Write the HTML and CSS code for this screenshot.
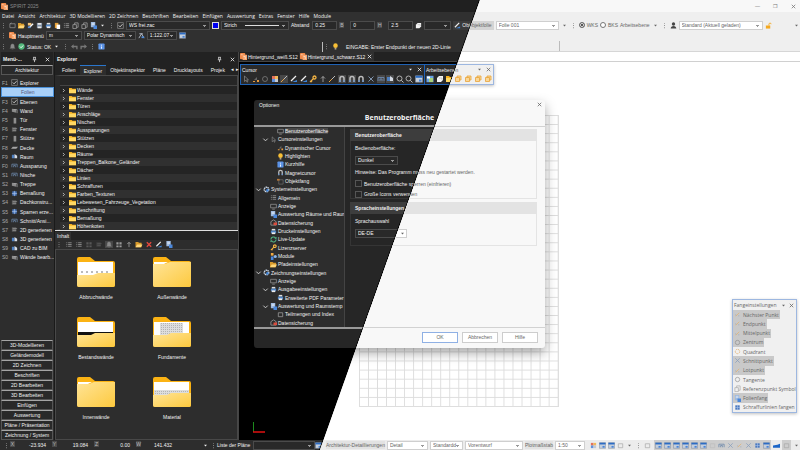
FILE: index.html
```html
<!DOCTYPE html>
<html lang="de">
<head>
<meta charset="utf-8">
<title>SPIRIT 2025</title>
<link rel="stylesheet" href="styles.css">
</head>
<body>
<svg class="sprite" aria-hidden="true">
  <symbol id="logo" viewBox="0 0 8 8"><rect width="6" height="7" rx="1" fill="#f08a4b"/><path d="M3 2h5v6H3z" fill="#f6a56c"/><path d="M1 2h2M4 4h2v3" stroke="#fff" stroke-width=".6" fill="none"/></symbol>
  <symbol id="folder" viewBox="0 0 8 8"><path d="M0 1h3l1 1h4v5H0z" fill="#f5b01f"/><path d="M0 3h8v4H0z" fill="#ffd864"/></symbol>
  <symbol id="open" viewBox="0 0 8 8"><path d="M0 1h3l1 1h3v5H0z" fill="#d99a2b"/><path d="M2 4h6L6 7H0z" fill="#ffd77a"/></symbol>
  <symbol id="new" viewBox="0 0 8 8"><path d="M1 2h6v4.500H1zM1 2l2-1" fill="none" stroke="#999" stroke-width=".8"/></symbol>
  <symbol id="disk" viewBox="0 0 8 8"><path d="M1 1h6v6H1z" fill="#7d8ea3"/><path d="M2 1h4v2H2zM2 5h4v2H2z" fill="#e8e8e8"/></symbol>
  <symbol id="edit" viewBox="0 0 8 8"><path d="M1 1h4v3H1z" fill="#f2c27a"/><path d="M3 6l4-4" stroke="#fff" stroke-width="1.500"/><path d="M1 5h3v2H1z" fill="#5b8fd6"/></symbol>
  <symbol id="print" viewBox="0 0 8 8"><path d="M2 1h4v2H2z" fill="#ddd"/><path d="M1 3h6v3H1z" fill="#4d83c4"/><path d="M2 5h4v2H2z" fill="#eee"/></symbol>
  <symbol id="paste" viewBox="0 0 8 8"><path d="M1 1h4v6H1z" fill="#e8a33a"/><path d="M3 3h4v5H3z" fill="#fff"/></symbol>
  <symbol id="copy" viewBox="0 0 8 8"><path d="M1 3h4v4.500H1zM3 3V1h4v5H5" fill="none" stroke="#aaa" stroke-width=".8"/></symbol>
  <symbol id="lines" viewBox="0 0 8 8"><path d="M1 2h1M3 2h4M1 4h1M3 4h4M1 6h1M3 6h4" stroke="#909090" stroke-width="1"/></symbol>
  <symbol id="tiles" viewBox="0 0 8 8"><path d="M1 1.500h2.500V4H1zM4.500 1.500H7V4H4.500zM1 5h2.500v2H1zM4.500 5H7v2H4.500z" fill="#9a9a9a"/></symbol>
  <symbol id="check" viewBox="0 0 8 8"><path d="M.7.7h6.600v6.600H.7z" fill="none" stroke="#8c8c8c" stroke-width=".8"/><path d="M2 4l1.500 1.500L6.300 2.500" fill="none" stroke="#eee" stroke-width=".9"/></symbol>
  <symbol id="mono" viewBox="0 0 8 8"><path d="M1 1.500h5v5H1z" fill="#5e5e5e"/><path d="M2 3h5M2 5h4" stroke="#9a9a9a" stroke-width=".8"/></symbol>
  <symbol id="wall" viewBox="0 0 8 8"><path d="M1 2l5 .5v4L1 5.500z" fill="#8b8b8b"/><path d="M3 3h4v4" stroke="#b5b5b5" stroke-width=".7" fill="none"/></symbol>
  <symbol id="door" viewBox="0 0 8 8"><path d="M3 1h3v6.500H3z" fill="#8e8e8e"/></symbol>
  <symbol id="slab" viewBox="0 0 8 8"><path d="M0 5.500L2 3h6L6 5.500z" fill="#a5a5a5"/></symbol>
  <symbol id="blue" viewBox="0 0 8 8"><path d="M1 2h3v4H1z" fill="#4d7fc0"/><path d="M4 1l3 2v3H4z" fill="#d4dae3"/></symbol>
  <symbol id="frame" viewBox="0 0 8 8"><path d="M1 6V2.500h6V6M3 6V4h2v2" fill="none" stroke="#6d88ab" stroke-width=".9"/></symbol>
  <symbol id="box" viewBox="0 0 8 8"><path d="M1.500 1.500h5v5h-5z" fill="#4c7ac0"/><path d="M1 4h6M4 1v6" stroke="#a9c1e4" stroke-width=".7"/></symbol>
  <symbol id="win" viewBox="0 0 8 8"><path d="M.5.8h7v6.400h-7z" fill="#c4cfdd" stroke="#7f8b99" stroke-width=".6"/><path d="M.5.800h7v2h-7z" fill="#2c6cc4"/><path d="M4 4.500h2.500v2H4z" fill="#4a85d8"/></symbol>
  <symbol id="bell" viewBox="0 0 8 8"><path d="M4 1C2 1 2 3 2 5L1 6h6L6 5c0-2 0-4-2-4M3 7h2" fill="#8a8a8a" stroke="#8a8a8a" stroke-width=".4"/></symbol>
  <symbol id="ok" viewBox="0 0 8 8"><circle cx="4" cy="4" r="3.600" fill="#53b87c"/><path d="M2.200 4l1.300 1.400 2.400-2.600" fill="none" stroke="#fff"/></symbol>
  <symbol id="undo" viewBox="0 0 8 8"><path d="M0 4l3-2.500v1.700h4.500V7H6V4.900H3v1.600z" fill="#777"/></symbol>
  <symbol id="redo" viewBox="0 0 8 8"><path d="M8 4L5 1.500v1.700H.5V7H2V4.900h3v1.600z" fill="#777"/></symbol>
  <symbol id="info" viewBox="0 0 8 8"><rect x=".5" y=".5" width="7" height="7" rx="1" fill="#5c93e6"/><path d="M4 2v1M4 4v2.500" stroke="#fff"/></symbol>
  <symbol id="bulb" viewBox="0 0 8 8"><circle cx="4" cy="3" r="2.600" fill="#f8bf35"/><path d="M3 5.500h2v2H3z" fill="#b5a58a"/></symbol>
  <symbol id="pen" viewBox="0 0 8 8"><path d="M1 7L7 1" stroke="#bcbcbc" stroke-width="1"/><path d="M1 7l3-3" stroke="#e5a34a" stroke-width="1"/></symbol>
  <symbol id="penb" viewBox="0 0 8 8"><path d="M1 6L6 1" stroke="#f0f0f0" stroke-width="1.300"/><path d="M2 7h5V5z" fill="#3f86dc"/></symbol>
  <symbol id="magnet" viewBox="0 0 8 8"><path d="M2 7V3.500a2 2 0 0 1 4 0V7" fill="none" stroke="#bdbdbd" stroke-width="1.500"/><path d="M1.200 6h1.600M5.200 6h1.600" stroke="#4c8bdc"/></symbol>
  <symbol id="lens" viewBox="0 0 8 8"><circle cx="3.500" cy="3.500" r="2.500" fill="none" stroke="#bcbcbc" stroke-width=".9"/><path d="M5.300 5.300L7.500 7.500" stroke="#bcbcbc"/></symbol>
  <symbol id="cross" viewBox="0 0 8 8"><path d="M1.500 1.500l5 5M6.500 1.500l-5 5" stroke="#8aa0bd" stroke-width=".9"/></symbol>
  <symbol id="x" viewBox="0 0 8 8"><path d="M2 2l4 4M6 2L2 6" stroke="currentColor" stroke-width=".9"/></symbol>
  <symbol id="red" viewBox="0 0 8 8"><path d="M1.500 1.500l5 5M6.500 1.500l-5 5" stroke="#e2483d" stroke-width="1.600"/></symbol>
  <symbol id="pin" viewBox="0 0 8 8"><path d="M2.500 1.500h3M3 1.500V4M5 1.500V4M2 4.300h4M4 4.300V7" stroke="currentColor" stroke-width=".8"/></symbol>
  <symbol id="caret" viewBox="0 0 8 8"><path d="M2.300 3h3.400L4 5.200z" fill="currentColor"/></symbol>
  <symbol id="dots" viewBox="0 0 8 8"><path d="M3.500 1h1v1h-1zM3.500 3.500h1v1h-1zM3.500 6h1v1h-1z" fill="#8a8a8a"/></symbol>
  <symbol id="up" viewBox="0 0 8 8"><path d="M4 7V1.500M2 3.500l2-2 2 2" fill="none" stroke="#b5b5b5" stroke-width=".8"/></symbol>
  <symbol id="right" viewBox="0 0 8 8"><path d="M3 1.500L5.500 4 3 6.500" fill="none" stroke="#ddd" stroke-width="1.200"/></symbol>
  <symbol id="down" viewBox="0 0 8 8"><path d="M1.500 3L4 5.500 6.500 3" fill="none" stroke="#ddd" stroke-width="1"/></symbol>
  <symbol id="screen" viewBox="0 0 8 8"><path d="M.7 1.500h6.600v4H.7zM2.500 7h3" fill="none" stroke="#9c9c9c" stroke-width=".8"/></symbol>
  <symbol id="arrow" viewBox="0 0 8 8"><path d="M2.500 1v5.500L4 5.200l1 2 .800-.4-1-2H6.500z" fill="none" stroke="#9a9a9a" stroke-width=".6"/></symbol>
  <symbol id="dyn" viewBox="0 0 8 8"><path d="M2 5l3-3v3z" fill="#666"/><path d="M5 5h2v2H5zM1 6h2v1H1z" fill="#e69a3e"/></symbol>
  <symbol id="snap" viewBox="0 0 8 8"><path d="M2 2h5v5H2z" fill="none" stroke="#777" stroke-width=".7"/><path d="M0 1h3v2H0z" fill="#b87838"/></symbol>
  <symbol id="gear" viewBox="0 0 8 8"><circle cx="4" cy="4" r="2.600" fill="none" stroke="#cfdcec" stroke-width="1.600" stroke-dasharray="1.500 .5"/><circle cx="5" cy="5" r="1.500" fill="#3f83d6"/></symbol>
  <symbol id="report" viewBox="0 0 8 8"><path d="M1 0h5v6H1z" fill="#9db9df"/><path d="M4 4h4v4H4z" fill="#4a87da"/><path d="M2 1.500h3M2 3h3" stroke="#fff" stroke-width=".6"/></symbol>
  <symbol id="backup" viewBox="0 0 8 8"><path d="M1 3l3-2 3 2v4H1z" fill="none" stroke="#aaa" stroke-width=".8"/><path d="M4 4h4v3H4z" fill="#d94d3d"/></symbol>
  <symbol id="sync" viewBox="0 0 8 8"><path d="M1 4a3 3 0 0 1 5.500-1.500M7 4a3 3 0 0 1-5.500 1.500" fill="none" stroke="#54b887" stroke-width="1.200"/><path d="M5 3h2.500V.8zM3 5H.5v2.200z" fill="#54b887"/></symbol>
  <symbol id="key" viewBox="0 0 8 8"><circle cx="5.500" cy="2.500" r="1.500" fill="none" stroke="#f5b544" stroke-width="1.300"/><path d="M4.500 3.500L1 7M2 6l1 1" stroke="#f5b544" stroke-width="1.200"/></symbol>
  <symbol id="module" viewBox="0 0 8 8"><path d="M1 0h3v3H1z" fill="#f0a940"/><path d="M1 4h3v4H1z" fill="#4a87da"/><circle cx="6" cy="4" r="1.800" fill="#8db6ea"/></symbol>
  <symbol id="palette" viewBox="0 0 8 8"><path d="M1 1h3v3H1z" fill="#e2715d"/><path d="M4 1h3v3H4z" fill="#f0b95a"/><path d="M1 4h3v3H1z" fill="#5f92dd"/><path d="M4 4h3v3H4z" fill="#c3c9d4"/></symbol>
  <symbol id="plane" viewBox="0 0 8 8"><path d="M.5.800h7v6.400h-7z" fill="#6aa3e6"/><path d="M3 3h4v4H3z" fill="#a9d27c"/><path d="M1 1.500h3v2H1z" fill="#fff"/></symbol>
  <symbol id="layer" viewBox="0 0 8 8"><path d="M3 1h4v4L5 7H1V3z" fill="#f4f4f4"/><path d="M3 3h3v2" stroke="#a8a8a8" stroke-width=".6" fill="none"/></symbol>
  <symbol id="orange" viewBox="0 0 8 8"><path d="M1.500 2.500h4v4h-4zM3 2.500V1h4v4H5.500" fill="#f8d79a" stroke="#e9a339" stroke-width=".8"/></symbol>
  <symbol id="user" viewBox="0 0 8 8"><circle cx="4" cy="2.300" r="1.900" fill="#444"/><path d="M.8 7.500Q1 4.500 4 4.500t3.200 3z" fill="#444"/></symbol>
  <symbol id="scale" viewBox="0 0 8 8"><path d="M1 7l3-5 3 5M1.500 2h4" fill="none" stroke="#c9d3df" stroke-width=".9"/><path d="M4 5h3v2H4z" fill="#4f8ad6"/></symbol>
  <symbol id="lock" viewBox="0 0 8 8"><path d="M1 4h5v3.500H1z" fill="#f5a91f"/><path d="M4.500 4V2.500a1.200 1.200 0 0 1 2.500 0" fill="none" stroke="#f5a91f"/></symbol>
  <symbol id="pale" viewBox="0 0 8 8"><path d="M2 6l4-4" stroke="#e4b06a" stroke-width=".8"/><path d="M1.500 4.500h1M5 5.500h1" stroke="#8a9bb2" stroke-width=".8"/></symbol>
  <symbol id="ring" viewBox="0 0 8 8"><circle cx="4" cy="4" r="2.500" fill="none" stroke="#888" stroke-width=".7"/></symbol>
  <symbol id="ringo" viewBox="0 0 8 8"><circle cx="4" cy="4" r="2.500" fill="none" stroke="#e0a860" stroke-width=".8" stroke-dasharray="2 .8"/></symbol>
  <symbol id="ghost" viewBox="0 0 8 8"><path d="M1.500 2h5v4.500h-5z" fill="none" stroke="#a8a8a8" stroke-width=".8"/></symbol>
  <symbol id="slabblue" viewBox="0 0 8 8"><path d="M0 6.500V4l5-1 3-1v4.500z" fill="#1c66c8"/></symbol>
  <symbol id="bigfolder" viewBox="0 0 38 31"><path d="M2 0h11l5 4h18q2 0 2 2v22q0 2-2 2H2q-2 0-2-2V2q0-2 2-2z" fill="#fbb314"/></symbol>
  <linearGradient id="gold" x1="0" y1="0" x2="1" y2="1"><stop offset="0" stop-color="#ffe497"/><stop offset="1" stop-color="#fdc93e"/></linearGradient>
  <pattern id="hatch" width="2" height="2" patternUnits="userSpaceOnUse"><rect width="2" height="2" fill="#ddd"/><rect width="1" height="1" fill="#b4b4b4"/></pattern>
</svg>

<div class="stage">
<div class="layer dark">
  <header class="titlebar"><svg><use href="#logo"/></svg><span>SPIRIT 2025</span></header>
  <div class="bars">
    <nav class="menubar"><a href="#">Datei</a><a href="#">Ansicht</a><a href="#">Architektur</a><a href="#">3D Modellieren</a><a href="#">2D Zeichnen</a><a href="#">Beschriften</a><a href="#">Bearbeiten</a><a href="#">Einfügen</a><a href="#">Auswertung</a><a href="#">Extras</a><a href="#">Fenster</a><a href="#">Hilfe</a><a href="#">Module</a></nav>
    <div class="row pens">
      <div class="seg files"><svg><use href="#dots"/></svg><svg><use href="#new"/></svg><svg><use href="#open"/></svg><svg><use href="#edit"/></svg><svg><use href="#disk"/></svg><svg><use href="#print"/></svg><svg><use href="#paste"/></svg><svg><use href="#lines"/></svg><svg><use href="#copy"/></svg><svg><use href="#copy"/></svg><svg><use href="#report"/></svg><svg><use href="#caret"/></svg><svg><use href="#dots"/></svg><svg><use href="#check"/></svg></div>
      <select class="w84" aria-label="Stift"><option>WS frei.zac</option></select>
      <i class="swatch"></i>
      <select class="w68 stroke" aria-label="Linie"><option>Strich</option></select>
      <label class="seg">Abstand <input class="w24" value="0.25"></label>
      <label class="seg"><b class="key">B</b><input class="w24 wide" value="0"></label>
      <label class="seg"><b class="key">H</b><input class="w24 wide" value="2.5"></label>
      <svg><use href="#layer"/></svg>
      <select class="w27" aria-label="Ebene"><option></option></select>
      <span class="objekt"><svg><use href="#penb"/></svg>Objekt</span>
    </div>
    <div class="row">
      <svg><use href="#dots"/></svg><svg><use href="#logo"/></svg><span>Hauptmenü</span>
      <select class="w36" aria-label="Einheit"><option>m</option></select>
      <select class="w52" aria-label="Koordinaten"><option>Polar Dynamisch</option></select>
      <svg><use href="#scale"/></svg>
      <select class="w30" aria-label="Maßstab"><option>1:122.07</option></select>
      <svg><use href="#win"/></svg>
    </div>
    <div class="row">
      <div class="seg half"><svg><use href="#dots"/></svg><svg><use href="#bell"/></svg><svg><use href="#ok"/></svg><span>Status: OK</span><svg><use href="#caret"/></svg><svg><use href="#dots"/></svg><svg><use href="#undo"/></svg><svg><use href="#redo"/></svg><svg><use href="#dots"/></svg><svg><use href="#info"/></svg></div>
      <div class="seg prompt"><svg><use href="#dots"/></svg><svg><use href="#bulb"/></svg><span>EINGABE: Erster Endpunkt der neuen 2D-Linie</span></div>
    </div>
  </div>

  <main class="work">
    <aside class="menu">
      <div class="panel-head"><b>Menü-...</b><svg><use href="#pin"/></svg><svg><use href="#x"/></svg></div>
      <button class="cat">Architektur</button>
      <ul class="keys">
        <li><span>F1</span><svg><use href="#check"/></svg>Explorer</li>
        <li class="sel"><span></span><svg></svg>Folien</li>
        <li><span>F3</span><svg><use href="#check"/></svg>Ebenen</li>
        <li><span>F4</span><svg><use href="#wall"/></svg>Wand</li>
        <li><span>F5</span><svg><use href="#door"/></svg>Tür</li>
        <li><span>F6</span><svg><use href="#mono"/></svg>Fenster</li>
        <li><span>F7</span><svg><use href="#door"/></svg>Stütze</li>
        <li><span>F8</span><svg><use href="#slab"/></svg>Decke</li>
        <li><span>F9</span><svg><use href="#blue"/></svg>Raum</li>
        <li><span>F0</span><svg><use href="#frame"/></svg>Aussparung</li>
        <li><span>S1</span><svg><use href="#frame"/></svg>Nische</li>
        <li><span>S2</span><svg><use href="#wall"/></svg>Treppe</li>
        <li><span>S3</span><svg><use href="#box"/></svg>Bemaßung</li>
        <li><span>S4</span><svg><use href="#mono"/></svg>Dachkonstru...</li>
        <li><span>S5</span><svg><use href="#box"/></svg>Sparren erze...</li>
        <li><span>S6</span><svg><use href="#frame"/></svg>Schnitt/Ansi...</li>
        <li><span>S7</span><svg><use href="#mono"/></svg>2D generieren</li>
        <li><span>S8</span><svg><use href="#blue"/></svg>3D generieren</li>
        <li><span>S9</span><svg><use href="#blue"/></svg>CAD zu BIM</li>
        <li><span>S0</span><svg><use href="#wall"/></svg>Wände bearb...</li>
      </ul>
      <div class="cats"><button class="cat">3D-Modellieren</button><button class="cat">Geländemodell</button><button class="cat">2D Zeichnen</button><button class="cat">Beschriften</button><button class="cat">2D Bearbeiten</button><button class="cat">3D Bearbeiten</button><button class="cat">Einfügen</button><button class="cat">Auswertung</button><button class="cat">Pläne / Präsentation</button><button class="cat">Zeichnung / System</button></div>
    </aside>

    <section class="explorer">
      <div class="panel-head"><b>Explorer</b><svg><use href="#pin"/></svg><svg><use href="#x"/></svg></div>
      <div class="tabs"><button>Folien</button><button class="on">Explorer</button><button>Objektinspektor</button><button>Pläne</button><button>Drucklayouts</button><button>Projek</button><i>◂</i><i>▸</i></div>
      <ul class="tree">
        <li><svg><use href="#right"/></svg><svg><use href="#folder"/></svg>Wände</li>
        <li><svg><use href="#right"/></svg><svg><use href="#folder"/></svg>Fenster</li>
        <li><svg><use href="#right"/></svg><svg><use href="#folder"/></svg>Türen</li>
        <li><svg><use href="#right"/></svg><svg><use href="#folder"/></svg>Anschläge</li>
        <li><svg><use href="#right"/></svg><svg><use href="#folder"/></svg>Nischen</li>
        <li><svg><use href="#right"/></svg><svg><use href="#folder"/></svg>Aussparungen</li>
        <li><svg><use href="#right"/></svg><svg><use href="#folder"/></svg>Stützen</li>
        <li><svg><use href="#right"/></svg><svg><use href="#folder"/></svg>Decken</li>
        <li><svg><use href="#right"/></svg><svg><use href="#folder"/></svg>Räume</li>
        <li><svg><use href="#right"/></svg><svg><use href="#folder"/></svg>Treppen_Balkone_Geländer</li>
        <li><svg><use href="#right"/></svg><svg><use href="#folder"/></svg>Dächer</li>
        <li><svg><use href="#right"/></svg><svg><use href="#folder"/></svg>Linien</li>
        <li><svg><use href="#right"/></svg><svg><use href="#folder"/></svg>Schraffuren</li>
        <li><svg><use href="#right"/></svg><svg><use href="#folder"/></svg>Farben_Texturen</li>
        <li><svg><use href="#right"/></svg><svg><use href="#folder"/></svg>Lebewesen_Fahrzeuge_Vegetation</li>
        <li><svg><use href="#right"/></svg><svg><use href="#folder"/></svg>Beschriftung</li>
        <li><svg><use href="#right"/></svg><svg><use href="#folder"/></svg>Bemaßung</li>
        <li><svg><use href="#right"/></svg><svg><use href="#folder"/></svg>Höhenkoten</li>
      </ul>
      <div class="inhalt"><button>Inhalt</button></div>
      <div class="tools"><svg><use href="#dots"/></svg><svg><use href="#lines"/></svg><svg><use href="#lines"/></svg><svg class="dim"><use href="#tiles"/></svg><svg class="dim"><use href="#mono"/></svg><svg class="lit"><use href="#bell"/></svg><svg><use href="#tiles"/></svg><svg><use href="#up"/></svg><svg><use href="#open"/></svg><svg><use href="#red"/></svg><svg><use href="#penb"/></svg><svg><use href="#report"/></svg></div>
      <div class="folders">
        <figure><svg viewBox="0 0 38 31"><use href="#bigfolder"/><path d="M1 5h35v14H1z" fill="#fff"/><path d="M4 15h30" stroke="#777" stroke-dasharray="2 3"/><path d="M0 18h16l5-2h17v12q0 2-2 2H2q-2 0-2-2z" fill="url(#gold)"/></svg><figcaption>Abbruchwände</figcaption></figure>
        <figure><svg viewBox="0 0 38 31"><use href="#bigfolder"/><path d="M1 5h14l-4 2H1z" fill="#fff"/><path d="M0 7h12l5-2h21v23q0 2-2 2H2q-2 0-2-2z" fill="url(#gold)"/></svg><figcaption>Außenwände</figcaption></figure>
        <figure><svg viewBox="0 0 38 31"><use href="#bigfolder"/><path d="M1 5h35v14H1z" fill="#fff"/><path d="M1 15h35v3H1z" fill="#111"/><path d="M0 18h14l4-2h20v12q0 2-2 2H2q-2 0-2-2z" fill="url(#gold)"/></svg><figcaption>Bestandswände</figcaption></figure>
        <figure><svg viewBox="0 0 38 31"><use href="#bigfolder"/><path d="M1 5h35v14H1z" fill="#fff"/><path d="M7 6h23v12H7z" fill="url(#hatch)"/><path d="M0 18h14l4-2h20v12q0 2-2 2H2q-2 0-2-2z" fill="url(#gold)"/></svg><figcaption>Fundamente</figcaption></figure>
        <figure><svg viewBox="0 0 38 31"><use href="#bigfolder"/><path d="M1 5h14l-4 2H1z" fill="#fff"/><path d="M0 7h12l5-2h21v23q0 2-2 2H2q-2 0-2-2z" fill="url(#gold)"/></svg><figcaption>Innenwände</figcaption></figure>
        <figure><svg viewBox="0 0 38 31"><use href="#bigfolder"/><path d="M1 5h35v14H1z" fill="#fff"/><path d="M1 13h35v5H1z" fill="url(#hatch)"/><path d="M0 18h14l4-2h20v12q0 2-2 2H2q-2 0-2-2z" fill="url(#gold)"/></svg><figcaption>Material</figcaption></figure>
      </div>
    </section>

    <section class="canvas">
      <div class="doctabs"><button><svg><use href="#logo"/></svg>Hintergrund_weiß.S12</button><button class="on"><svg><use href="#logo"/></svg>Hintergrund_schwarz.S12<svg><use href="#x"/></svg></button></div>
      <svg class="axis" viewBox="0 0 12 12"><path d="M.5 1v10" stroke="#1d8a1d"/><path d="M0 11h12" stroke="#e01010" stroke-width="1.500"/></svg>
    </section>
  </main>

  <footer class="statusbar">
    <svg><use href="#dots"/></svg>
    <span class="coord"><b class="key">X</b><output>-23.934</output></span><span class="coord"><b class="key">Y</b><output>19.084</output></span><span class="coord"><b class="key">Z</b><output>0.00</output></span><span class="coord"><b class="key">W</b><output>141.432</output></span>
    <svg class="push"><use href="#caret"/></svg><svg><use href="#dots"/></svg>
    <label class="seg">Liste der Pläne <select class="w62"><option></option></select></label>
    <svg><use href="#win"/></svg>
  </footer>

  <div class="palette cursor">
    <div class="pal-head"><span>Cursor</span><svg><use href="#caret"/></svg><svg><use href="#x"/></svg></div>
    <div class="pal-icons"><svg><use href="#arrow"/></svg><svg><use href="#dyn"/></svg><svg><use href="#ring"/></svg><svg><use href="#palette"/></svg><svg class="lit"><use href="#pen"/></svg><svg><use href="#penb"/></svg><svg><use href="#penb"/></svg><svg><use href="#key"/></svg><svg><use href="#up"/></svg><svg><use href="#pen"/></svg><svg class="lit"><use href="#magnet"/></svg><svg class="lit"><use href="#magnet"/></svg><svg><use href="#magnet"/></svg><svg><use href="#cross"/></svg><svg class="lit"><use href="#frame"/></svg><svg class="lit"><use href="#blue"/></svg><svg><use href="#lens"/></svg><svg><use href="#lens"/></svg><svg><use href="#win"/></svg></div>
  </div>
  <div class="palette planes">
    <div class="pal-head"><span>Arbeitsebenen</span></div>
    <div class="pal-icons"><svg><use href="#plane"/></svg><svg><use href="#layer"/></svg><svg><use href="#folder"/></svg></div>
  </div>

  <div class="dialog">
    <div class="dlg-head"><span>Optionen</span><h1>Benutzeroberfläche</h1></div>
    <div class="dlg-body">
      <ul class="options">
        <li class="l3"><svg><use href="#screen"/></svg><mark>Benutzeroberfläche</mark></li>
        <li class="l2"><svg><use href="#down"/></svg><svg><use href="#arrow"/></svg>Cursoreinstellungen</li>
        <li class="l3"><svg><use href="#dyn"/></svg>Dynamischer Cursor</li>
        <li class="l3"><svg><use href="#bulb"/></svg>Highlighten</li>
        <li class="l3"><svg><use href="#info"/></svg>Kurzhilfe</li>
        <li class="l3"><svg><use href="#magnet"/></svg>Magnetcursor</li>
        <li class="l3"><svg><use href="#snap"/></svg>Objektfang</li>
        <li class="l1"><svg><use href="#down"/></svg><svg><use href="#gear"/></svg>Systemeinstellungen</li>
        <li class="l2 leaf"><svg><use href="#lines"/></svg>Allgemein</li>
        <li class="l2 leaf"><svg><use href="#screen"/></svg>Anzeige</li>
        <li class="l2 leaf"><svg><use href="#report"/></svg>Auswertung Räume und Raum</li>
        <li class="l2 leaf"><svg><use href="#backup"/></svg>Datensicherung</li>
        <li class="l2 leaf"><svg><use href="#print"/></svg>Druckeinstellungen</li>
        <li class="l2 leaf"><svg><use href="#sync"/></svg>Live-Update</li>
        <li class="l2 leaf"><svg><use href="#key"/></svg>Lizenzserver</li>
        <li class="l2 leaf"><svg><use href="#module"/></svg>Module</li>
        <li class="l2 leaf"><svg><use href="#open"/></svg>Pfadeinstellungen</li>
        <li class="l1"><svg><use href="#down"/></svg><svg><use href="#gear"/></svg>Zeichnungseinstellungen</li>
        <li class="l2 leaf"><svg><use href="#screen"/></svg>Anzeige</li>
        <li class="l2"><svg><use href="#down"/></svg><svg><use href="#print"/></svg>Ausgabeeinstellungen</li>
        <li class="l3"><svg><use href="#print"/></svg>Erweiterte PDF Parameter</li>
        <li class="l2"><svg><use href="#down"/></svg><svg><use href="#report"/></svg>Auswertung und Raumstemp</li>
        <li class="l3"><svg><use href="#ghost"/></svg>Teilmengen und Index</li>
        <li class="l2 leaf"><svg><use href="#backup"/></svg>Datensicherung</li>
      </ul>
      <div class="pane">
        <div class="group ui">
          <h2>Benutzeroberfläche</h2>
          <label class="r2" for="ui">Bedienoberfläche:</label>
          <select class="r3 w43" id="ui"><option>Dunkel</option></select>
          <p class="r4">Hinweise: Das Programm muss neu gestartet werden.</p>
          <label class="r5"><input type="checkbox">Benutzeroberfläche sperren (einfrieren)</label>
          <label class="r6"><input type="checkbox">Große Icons verwenden</label>
        </div>
        <div class="group lang">
          <h2>Spracheinstellungen</h2>
          <label class="r2" for="lang">Sprachauswahl</label>
          <select class="r3 w52" id="lang"><option>DE-DE</option></select>
        </div>
      </div>
    </div>
    <div class="dlg-foot"></div>
  </div>
</div>

<div class="edge"></div>

<div class="layer light">
  <header class="titlebar"><span class="winbtns"><i>—</i><i>❐</i><svg><use href="#x"/></svg></span></header>
  <div class="bars">
    <div class="row first">
      <span class="objekt">Objektfolie</span>
      <select class="w63" aria-label="Folie"><option>Folie 001</option></select>
      <svg><use href="#caret"/></svg><svg><use href="#dots"/></svg>
      <label class="seg"><input type="radio" name="ks" checked>WKS</label>
      <label class="seg"><input type="radio" name="ks">BKS</label>
      <span>Arbeitsebene</span><svg><use href="#caret"/></svg><svg><use href="#dots"/></svg><svg><use href="#user"/></svg>
      <select class="w84" aria-label="Profil"><option>Standard (Aktuell geladen)</option></select>
      <svg><use href="#lock"/></svg><svg class="push"><use href="#caret"/></svg>
    </div>
    <div class="stop"></div>
  </div>
  <main class="work paper"><div class="strip"></div><div class="grid"></div></main>
  <footer class="statusbar">
    <label class="seg"><span class="chip">Architektur-Detaillierungen</span><select class="w41"><option>Detail</option></select></label>
    <select class="w33" aria-label="Standard"><option>Standardd</option></select>
    <select class="w58" aria-label="Phase"><option>Vorentwurf</option></select>
    <label class="seg"><span class="chip">Plotmaßstab</span><select class="w30"><option>1:50</option></select></label>
    <div class="icons wider"><svg><use href="#palette"/></svg><svg><use href="#win"/></svg><svg><use href="#win"/></svg><svg><use href="#ghost"/></svg><svg><use href="#caret"/></svg><svg><use href="#dots"/></svg><svg><use href="#ghost"/></svg></div>
    <div class="icons grey"><svg><use href="#win"/></svg><svg><use href="#win"/></svg><svg><use href="#win"/></svg><svg><use href="#win"/></svg><svg><use href="#win"/></svg><svg><use href="#win"/></svg><svg class="dim"><use href="#ghost"/></svg><svg><use href="#frame"/></svg><svg><use href="#cross"/></svg><svg><use href="#pale"/></svg><svg><use href="#cross"/></svg><svg><use href="#box"/></svg><svg><use href="#win"/></svg></div>
    <svg><use href="#slabblue"/></svg>
    <div class="icons grey"><svg><use href="#ghost"/></svg></div>
    <svg><use href="#caret"/></svg>
  </footer>

  <div class="palette planes">
    <div class="pal-head"><span aria-hidden="true">Arbeitsebenen</span><svg><use href="#caret"/></svg><svg><use href="#x"/></svg></div>
    <div class="pal-icons end"><svg><use href="#orange"/></svg><svg><use href="#orange"/></svg><svg><use href="#orange"/></svg><svg><use href="#orange"/></svg></div>
  </div>

  <div class="dialog">
    <div class="dlg-head"><button class="close" aria-label="Schließen"><svg><use href="#x"/></svg></button></div>
    <div class="dlg-body">
      <div></div>
      <div class="pane">
        <div class="group ui">
          <h2></h2>
          <p class="r4" aria-hidden="true">Hinweise: Das Programm muss neu gestartet werden.</p>
          <div class="r5 copy" aria-hidden="true">Benutzeroberfläche sperren (einfrieren)</div>
          <div class="r6 copy" aria-hidden="true">Große Icons verwenden</div>
        </div>
        <div class="group lang"><h2></h2><div class="r3 w52 boxed"><svg><use href="#caret"/></svg></div></div>
      </div>
    </div>
    <div class="dlg-foot"><button class="main">OK</button><button>Abbrechen</button><button>Hilfe</button></div>
  </div>

  <div class="palette fang">
    <div class="pal-head"><span>Fangeinstellungen</span><svg><use href="#caret"/></svg><svg><use href="#x"/></svg></div>
    <ul>
      <li><button class="on"><svg><use href="#pale"/></svg>Nächster Punkt</button></li>
      <li><button class="on"><svg><use href="#pale"/></svg>Endpunkt</button></li>
      <li><button class="on"><svg><use href="#pale"/></svg>Mittelpunkt</button></li>
      <li><button class="on"><svg><use href="#ring"/></svg>Zentrum</button></li>
      <li><button><svg><use href="#ringo"/></svg>Quadrant</button></li>
      <li><button class="on"><svg><use href="#cross"/></svg>Schnittpunkt</button></li>
      <li><button class="on"><svg><use href="#pale"/></svg>Lotpunkt</button></li>
      <li><button><svg><use href="#ring"/></svg>Tangente</button></li>
      <li><button><svg><use href="#copy"/></svg>Referenzpunkt Symbol</button></li>
      <li><button class="on"><svg><use href="#report"/></svg>Folienfang</button></li>
      <li><button><svg><use href="#box"/></svg>Schraffurlinien fangen</button></li>
    </ul>
  </div>
</div>
</div>
</body>
</html>
```
FILE: styles.css
```css
* { box-sizing: border-box; margin: 0; padding: 0; }
html, body { height: 100%; }
body { font: 5px/8px "Liberation Sans", Arial, sans-serif; overflow: hidden; background: #000; }
ul { list-style: none; }
a { color: inherit; text-decoration: none; }
i { font-style: normal; }
svg { width: 7px; height: 7px; flex: none; display: block; }
.sprite { position: absolute; width: 0; height: 0; }
button, input, select { font: inherit; color: inherit; background: none; border: 0; border-radius: 0; outline: 0; }

.stage { position: relative; min-height: 100vh; display: grid; }
.layer { grid-area: 1 / 1; position: relative; display: grid; grid-template-rows: 12px 40px 1fr 10px; min-width: 0; }
.dark { --field: #292929; --line: #4b4b4b; color: #f2f2f2; background: #2d2d2d; }
.light { --field: #fff; --line: #cfcfcf; color: #666; background: #fff; clip-path: polygon(60% 0, 100% 0, 100% 100%, 40% 100%); }
.edge { grid-area: 1 / 1; z-index: 1; background: #000; clip-path: polygon(calc(60% - 1px) 0, 60% 0, 40% 100%, calc(40% - 1px) 100%); }
.light { z-index: 2; }

/* form fields */
select, input:not([type]) { height: 9px; line-height: 7px; border: 1px solid var(--line); background-color: var(--field); padding: 0 2px; }
select {
  appearance: none; min-width: 0;
  background-image: linear-gradient(#999, #999), linear-gradient(#999, #999);
  background-size: 3px 1px, 1px 1px; background-repeat: no-repeat;
  background-position: right 3px top 3px, right 4px top 4px;
}
.w24 { width: 25px; } .w27 { width: 27px; } .w30 { width: 30px; } .w33 { width: 33px; }
.w36 { width: 36px; } .w41 { width: 41px; } .w43 { width: 43px; } .w52 { width: 52px; }
.w58 { width: 58px; } .w62 { width: 62px; } .w63 { width: 63px; } .w68 { width: 68px; } .w84 { width: 84px; }
.seg { display: flex; align-items: center; gap: 3px; white-space: nowrap; }
.push { margin-left: auto; }

/* title and toolbars */
.titlebar { display: flex; align-items: center; gap: 2px; padding: 0 1px; background: #202020; color: #888; }
.light .titlebar { background: #f8f8f8; color: #777; }
.bars { display: grid; grid-template-rows: 8px 10px 11px 11px; background: #303030; overflow: hidden; }
.light .bars { background: #efefef; border-bottom: 1px solid #d6d6d6; }
.menubar { display: flex; align-items: center; gap: 4px; padding-left: 2px; font-family: "Open Sans", sans-serif; white-space: nowrap; }
.row { display: flex; align-items: center; gap: 2px; white-space: nowrap; min-width: 0; }
.row .seg { gap: 2px; }
.pens .seg { gap: 3px; }
.row .files { width: 124px; justify-content: space-between; gap: 0; }
.swatch { width: 7px; height: 7px; background: #0000f0; border: 1px solid #ddd; }
.stroke { background-image: linear-gradient(#999, #999), linear-gradient(#999, #999), linear-gradient(#ddd, #ddd); background-size: 3px 1px, 1px 1px, 34px 1px; background-position: right 3px top 3px, right 4px top 4px, right 9px top 3px; }
.key { width: 5px; height: 6px; line-height: 6px; background: #4a4a4a; color: #bbb; font-weight: 400; text-align: center; }
.wide { margin-left: 3px; }
.objekt { display: flex; align-items: center; height: 9px; gap: 1px; background: #3b3b3b; padding: 0 1px; }
.light .objekt { background: #d4d4d4; padding: 0 2px; }
.light .first { grid-row: 2; padding-left: 58.25%; }
input[type="radio"] { appearance: none; width: 6px; height: 6px; border: 1px solid #777; border-radius: 50%; background: #fff; }
input[type="radio"]:checked { background: #222; box-shadow: inset 0 0 0 1px #fff; }
.half { width: 40%; }
.prompt { border-left: 1px solid #bbb; height: 10px; }
.prompt svg + span { margin-left: 5px; }
.stop { grid-row: 4; width: 70%; border-right: 1px solid #bbb; }
.winbtns { margin-left: auto; display: flex; align-items: center; gap: 13px; padding-right: 2px; }

/* work area */
.work { display: grid; grid-template-columns: 54px 185px 1fr; min-width: 0; background: #1c1c1c; }
.menu, .explorer { display: flex; flex-direction: column; min-width: 0; background: #2d2d2d; }
.menu { padding: 0 1px; }
.explorer { border-left: 1px solid #1a1a1a; border-right: 1px solid #444; }
.panel-head { height: 13px; flex: none; display: flex; align-items: center; gap: 6px; padding: 1px 2px 0; background: #222; }
.panel-head b { margin-right: auto; }
.cat { display: block; width: 100%; height: 10px; flex: none; line-height: 8px; border: 1px solid #555; border-top-color: #a5a5a5; text-align: center; background: #292929; white-space: nowrap; }
.keys { display: grid; grid-auto-rows: 1fr; height: 184px; margin-top: 3px; white-space: nowrap; }
.keys li { display: flex; align-items: center; gap: 1px; padding-left: 1px; }
.keys span { width: 8px; color: #aaa; }
.keys svg { margin-right: 1px; }
.keys .sel { background: #a9d0f8; color: #557; border: 1px solid #4a90d8; }
.cats { margin-top: auto; }
.tabs { height: 10px; display: flex; align-items: stretch; background: #222; white-space: nowrap; padding-left: 3px; flex: none; }
.tabs button { padding: 0 4px; line-height: 8px; }
.tabs .on { background: #2d2d2d; border-top: 1px solid #2a76cc; }
.tabs i { margin-left: 2px; }
.tree { display: grid; grid-auto-rows: 1fr; height: 155px; flex: none; padding-top: 10px; border: 1px solid #484848; border-left: 5px solid #2a2a2a; background: linear-gradient(#444, #444) 0 9px / 100% 1px no-repeat #262626; }
.tree li { display: flex; align-items: center; padding-left: 1px; gap: 1px; background: #242424; white-space: nowrap; }
.tree li:nth-child(even) { background: #303030; }
.tree svg:first-child { width: 5px; height: 5px; margin-right: 2px; }
.inhalt { flex: none; height: 10px; border-top: 1px solid #ddd; background: #222; padding-top: 1px; }
.inhalt button { padding: 0 2px; background: #303030; line-height: 8px; }
.tools { flex: none; height: 9px; display: flex; align-items: center; gap: 2px; }
.tools svg { width: 8px; height: 7px; }
.dim { opacity: .4; }
.lit { background: #474747; }
.folders { flex: 1; display: grid; grid-template-columns: 76px 76px; grid-auto-rows: 60px; align-content: start; justify-content: start; padding: 7px 0 0 2px; border: 1px solid #484848; }
.folders figure { display: flex; flex-direction: column; align-items: center; gap: 5px; }
.folders svg { width: 38px; height: 31px; }
.canvas { background: #000; position: relative; min-width: 0; }
.doctabs { height: 10px; display: flex; background: #222; border-bottom: 1px solid #444; white-space: nowrap; }
.doctabs button { display: flex; align-items: center; gap: 1px; padding: 0 1px; line-height: 8px; }
.doctabs .on { background: #303030; }
.axis { position: absolute; left: 14px; bottom: 7px; width: 12px; height: 12px; }
.paper { background: #fff; position: relative; display: block; }
.strip { height: 10px; border-bottom: 1px solid #d0d0d0; }
.grid {
  position: absolute; left: 359px; top: 63px; width: 200px; height: 292px;
  border: solid #dedede; border-width: 0 1px 1px 0;
  background: linear-gradient(90deg, #dcdcdc 1px, transparent 1px), linear-gradient(#dcdcdc 1px, transparent 1px);
  background-size: calc(100% / 22) calc(100% / 32);
}

/* status bar */
.statusbar { display: flex; align-items: center; white-space: nowrap; background: #2d2d2d; min-width: 0; }
.dark .statusbar { padding-left: 3px; }
.coord { display: flex; justify-content: space-between; width: 36px; margin-right: 6px; }
.dark .statusbar .push { margin-left: 24px; margin-right: 1px; }
.light .statusbar { background: #ececec; padding-left: 40.75%; gap: 2px; }
.light .statusbar .seg { gap: 2px; }
.chip { background: #e2e2e2; }
.icons { display: flex; align-items: center; gap: 2px; height: 10px; padding: 0 1px; }
.icons.wider { padding-left: 3px; }
.icons.grey { background: #cdcdcd; }

/* floating palettes */
.palette { position: absolute; border: 1px solid #1f62b5; }
.dark .palette { background: #2a2a2a; }
.light .palette { background: #f0f0f0; border-color: #9db7e0; box-shadow: 0 1px 3px rgb(0 0 0 / 25%); }
.cursor { left: 240px; top: 64px; width: 185px; height: 21px; }
.planes { left: 424px; top: 64px; width: 70px; height: 21px; }
.pal-head { height: 9px; display: flex; align-items: center; gap: 2px; padding: 0 1px; white-space: nowrap; }
.pal-head span { margin-right: auto; }
.pal-icons { display: flex; align-items: center; justify-content: space-between; height: 10px; padding: 0 1px; }
.pal-icons svg { width: 8px; height: 8px; }
.planes .pal-icons { justify-content: start; gap: 2px; }
.planes .pal-icons.end { justify-content: end; }
.fang { right: 3px; top: 299px; width: 65px; font-family: "Open Sans", sans-serif; }
.fang .pal-head { height: 10px; gap: 1px; }
.fang ul { display: grid; grid-auto-rows: 1fr; height: 102px; }
.fang button { display: flex; align-items: center; gap: 2px; height: 100%; padding: 0 1px; white-space: nowrap; line-height: 8px; }
.fang .on { background: #c9c9c9; }

/* options dialog */
.dialog { position: absolute; left: 254px; top: 100px; width: 291px; height: 248px; display: grid; grid-template-rows: 27px 1fr 21px; border-radius: 3px; background: #262626; }
.light .dialog { background: #f8f8f8; box-shadow: 0 5px 12px rgb(0 0 0 / 35%); }
.dlg-head { padding: 1px 5px 0; border-bottom: 2px solid #999; }
.light .dlg-head, .light .dlg-foot { border-width: 0; }
.light .dlg-head { box-shadow: inset 0 -1px #d2d2d2; }
.light .dlg-foot { box-shadow: inset 0 1px #d2d2d2; }
h1 { font: bold 7px/12px "Open Sans", sans-serif; text-align: center; padding-top: 3px; }
.close { display: block; margin-left: auto; margin-right: -3px; }
.dlg-body { display: grid; grid-template-columns: 91px 1fr; min-height: 0; }
.options { display: grid; grid-auto-rows: 1fr; min-height: 0; margin-left: 1px; border-right: 1px solid #444; background: #2d2d2d; overflow: hidden; }
.options li { display: flex; align-items: center; gap: 1px; white-space: nowrap; line-height: 6px; min-height: 0; }
.l1 { padding-left: 0; } .l2 { padding-left: 7px; } .l3 { padding-left: 22px; } .l2.leaf { padding-left: 15px; }
mark { background: #484848; color: inherit; }
.pane { padding: 2px 8px 0 5px; display: flex; flex-direction: column; gap: 3px; }
.group { display: grid; grid-template-rows: 12px 14px 10px 13px 11px 10px; box-shadow: inset 0 0 0 1px #353535; align-items: center; justify-items: start; white-space: nowrap; }
.light .group { box-shadow: inset 0 0 0 1px #e4e4e4; }
.lang { grid-template-rows: 12px 14px 10px 8px; }
h2 { font: bold 5px/12px "Liberation Sans", Arial, sans-serif; justify-self: stretch; height: 12px; padding-left: 5px; background: #3d3d3d; }
.light h2 { background: #e3e3e3; }
.group > :not(h2) { margin-left: 5px; }
.r2 { grid-row: 2; } .r3 { grid-row: 3; } .r4 { grid-row: 4; } .r5 { grid-row: 5; } .r6 { grid-row: 6; }
label.r5, label.r6 { display: flex; align-items: center; gap: 2px; }
.copy { padding-left: 9px; }
input[type="checkbox"] { appearance: none; width: 7px; height: 7px; border: 1px solid #555; }
.boxed { height: 9px; border: 1px solid #cfcfcf; background: #fff; display: flex; justify-content: end; }
.dlg-foot { border-top: 2px solid #999; display: flex; align-items: center; justify-content: end; gap: 4px; padding: 0 7px; }
.dlg-foot button { width: 36px; height: 11px; line-height: 9px; border: 1px solid #cdcdcd; background: #fff; }
.dlg-foot .main { border-color: #8fb0e4; }
```
